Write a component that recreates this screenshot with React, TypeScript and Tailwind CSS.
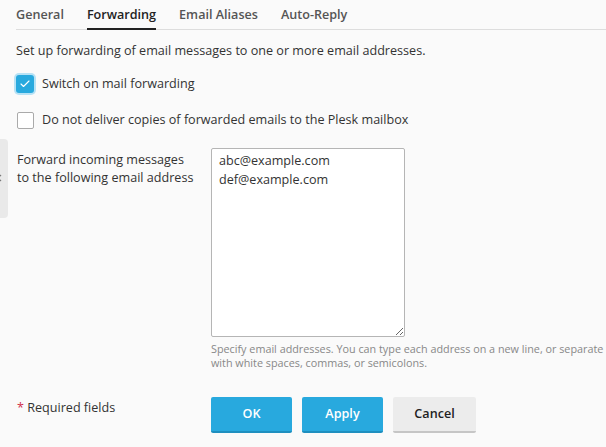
import { Check } from 'lucide-react';

const tabs = ['General', 'Forwarding', 'Email Aliases', 'Auto-Reply'];

export default function App() {
  return (
    <div
      className="relative w-[606px] h-[447px] overflow-hidden bg-[#fafafa] text-[#333] text-[12.6px]"
      style={{ fontFamily: "'Open Sans', 'Noto Sans', sans-serif" }}
    >
      {/* side handle */}
      <div className="absolute left-[-20px] top-[139px] w-[28px] h-[79px] rounded-[4px] bg-[#e9e9e9]">
        <svg className="absolute left-[17px] top-[35px]" width="6" height="8" viewBox="0 0 6 8">
          <path d="M4 1 L1 4 L4 7" fill="none" stroke="#777" strokeWidth="1.2" />
        </svg>
      </div>

      <div className="pl-[16px]">
        {/* Tabs */}
        <div className="flex border-b border-[#ddd] h-[30px]">
          {tabs.map((t, i) => (
            <div
              key={t}
              className={
                'mr-[23px] pt-[6px] leading-[18px] h-[30px] font-semibold ' +
                (i === 1 ? 'text-[#222] border-b-2 border-[#222]' : 'text-[#555]')
              }
            >
              {t}
            </div>
          ))}
        </div>

        <p className="mt-[12px] leading-[18px]">Set up forwarding of email messages to one or more email addresses.</p>

        {/* checkboxes */}
        <div className="mt-[15px] flex items-center">
          <div className="w-[18px] h-[18px] rounded-[3px] bg-[#28a9de] ring-[2px] ring-[#b7e2f5] flex items-center justify-center">
            <Check size={12} strokeWidth={2.2} color="#fff" />
          </div>
          <span className="ml-[8px] leading-[18px]">Switch on mail forwarding</span>
        </div>

        <div className="mt-[18px] flex items-center">
          <div className="ml-[1px] w-[17px] h-[17px] rounded-[2px] bg-white border border-[#aaa]" />
          <span className="ml-[8px] leading-[18px]">Do not deliver copies of forwarded emails to the Plesk mailbox</span>
        </div>

        {/* forward field */}
        <div className="mt-[19px] flex">
          <div className="w-[195px] shrink-0 pl-[1px] pt-[3px] leading-[18px]">
            Forward incoming messages
            <br />
            to the following email address
          </div>
          <div className="shrink-0">
            <textarea
              className="block w-[194px] h-[189px] bg-white border border-[#b5b5b5] rounded-[2px] px-[7px] py-[2px] leading-[19px] text-[#333] outline-none"
              style={{ fontFamily: "'Open Sans', 'Noto Sans', sans-serif", fontSize: 12.6 }}
              defaultValue={'abc@example.com\ndef@example.com'}
            />
            <p className="mt-[5px] whitespace-nowrap text-[10.8px] leading-[14px] text-[#888]">
              Specify email addresses. You can type each address on a new line, or separate them
              <br />
              with white spaces, commas, or semicolons.
            </p>
          </div>
        </div>

        {/* footer */}
        <div className="mt-[26px] flex">
          <div className="w-[195px] shrink-0 pl-[1px] pt-[3px] leading-[18px]">
            <span className="text-[#d02d4b]">*</span> Required fields
          </div>
          <div className="flex gap-[10px] mt-[1px]">
            <button className="w-[81px] h-[36px] rounded-[2px] bg-[#28a9de] border-b-2 border-[#1f8fbf] text-white font-semibold">
              OK
            </button>
            <button className="w-[81px] h-[36px] rounded-[2px] bg-[#28a9de] border-b-2 border-[#1f8fbf] text-white font-semibold">
              Apply
            </button>
            <button className="w-[83px] h-[36px] rounded-[2px] bg-[#ececec] border-b-2 border-[#c6c6c6] text-[#222] font-semibold">
              Cancel
            </button>
          </div>
        </div>
      </div>
    </div>
  );
}
